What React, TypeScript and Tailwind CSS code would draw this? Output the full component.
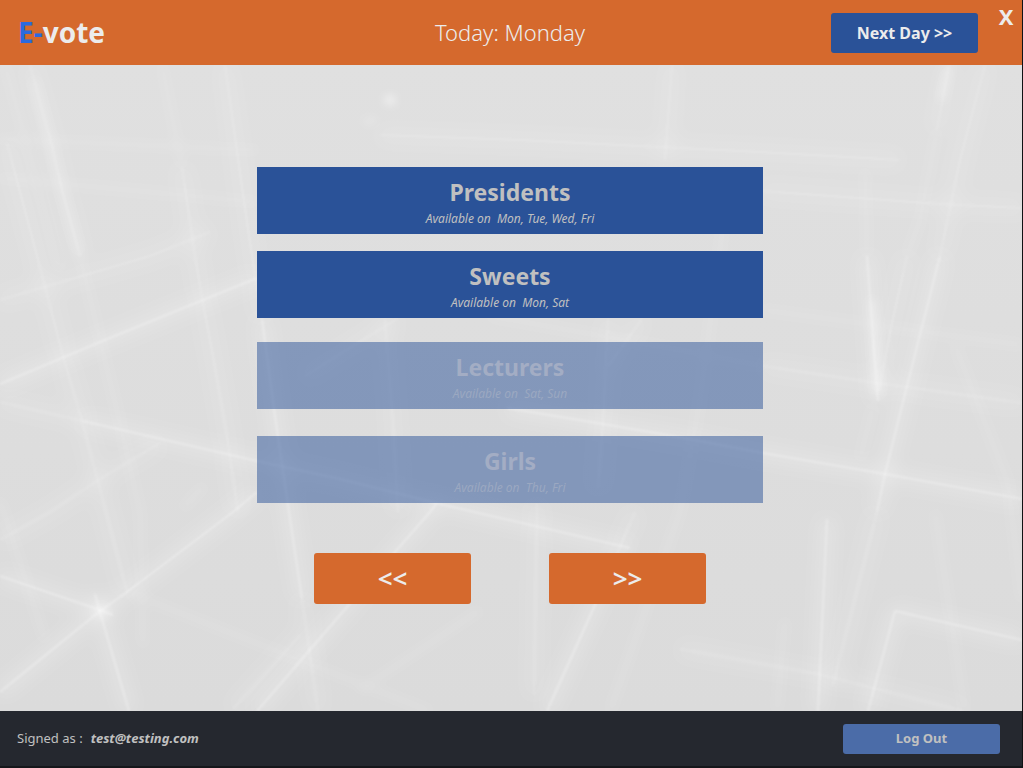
import React from "react";

type Category = { name: string; days: string; open: boolean; spacing: string };

const categories: Category[] = [
  { name: "Presidents", days: "Mon, Tue, Wed, Fri", open: true, spacing: "" },
  { name: "Sweets", days: "Mon, Sat", open: true, spacing: "mt-[17px]" },
  { name: "Lecturers", days: "Sat, Sun", open: false, spacing: "mt-6" },
  { name: "Girls", days: "Thu, Fri", open: false, spacing: "mt-[27px]" },
];

const brightRays = [
  "M0 384L100 342L257 278",
  "M262 319L275 416L289 512L302 599",
  "M83 421L257 461L340 479L440 504L630 548",
  "M0 576L100 610L113 615",
  "M95 594L100 612L129 711",
  "M0 692L100 611L127 592L233 512L257 492",
  "M257 711L340 615L430 512L437 503",
  "M547 711L595 605L610 570",
  "M763 453L885 474L1022 499",
  "M507 408L603 424L673 436L763 453",
  "M895 611L1022 640",
  "M895 611L868 711",
  "M827 519L818 711",
  "M940 256L907 386L885 474L877 512",
  "M867 256L878 401",
];

const softRays = [
  "M0 300L150 256L210 232",
  "M30 65L52 145L62 190L80 256",
  "M7 143L37 256L63 356L82 421L106 512L127 592",
  "M182 167L195 256L203 303L213 356L227 436L238 512",
  "M225 65L242 187L252 256L262 319",
  "M302 599L318 711",
  "M0 402L83 421",
  "M0 540L50 512L100 479L160 443",
  "M233 709L300 635",
  "M380 135L520 140L680 148L760 152L900 160",
  "M762 191L940 204L1022 208",
  "M949 65L937 130",
  "M907 256L892 323L879 390",
  "M985 65L960 160L940 256",
  "M877 512L833 685",
  "M763 366L877 383L1022 403",
  "M537 504L534 695",
  "M610 570L635 512",
  "M608 319L603 423L598 489",
  "M642 319L608 366",
  "M397 319L340 354L305 376",
  "M385 319L393 423L398 512",
  "M680 649L818 674L963 711",
  "M672 65L665 160",
];

const faintRays = [
  "M5 65L45 210L60 270",
  "M80 256L100 340L120 423L140 512L143 645",
  "M937 130L920 220L907 256",
  "M873 406L860 459",
  "M955 345L1008 483L1022 600",
  "M777 711L785 620",
  "M183 508L204 486",
  "M0 178L257 202",
  "M0 139L257 150",
  "M127 592L340 676L430 711",
  "M162 65L182 167",
  "M490 316L680 350L763 366",
  "M360 690L480 610",
  "M610 711L680 512",
  "M725 210L700 400L680 512",
  "M865 170L867 256",
  "M0 500L45 640",
  "M763 310L1022 345",
  "M935 512L965 711",
];

function Backdrop() {
  return (
    <svg
      aria-hidden="true"
      className="absolute inset-0 h-full w-full"
      viewBox="0 65 1022 646"
      preserveAspectRatio="none"
      fill="none"
      stroke="#ffffff"
    >
      <defs>
        <filter id="glow" filterUnits="userSpaceOnUse" x="-20" y="45" width="1062" height="686">
          <feGaussianBlur stdDeviation="8" />
        </filter>
        <filter id="edge" filterUnits="userSpaceOnUse" x="-20" y="45" width="1062" height="686">
          <feGaussianBlur stdDeviation="1" />
        </filter>
        <filter id="haze" filterUnits="userSpaceOnUse" x="-20" y="45" width="1062" height="686">
          <feGaussianBlur stdDeviation="4" />
        </filter>
      </defs>
      <g filter="url(#glow)" strokeWidth="14" strokeOpacity="0.2">
        {brightRays.map((d) => (
          <path key={d} d={d} />
        ))}
      </g>
      <g filter="url(#glow)" strokeWidth="14" strokeOpacity="0.12">
        {softRays.map((d) => (
          <path key={d} d={d} />
        ))}
      </g>
      <g filter="url(#edge)" strokeWidth="2" strokeOpacity="0.28">
        {brightRays.map((d) => (
          <path key={d} d={d} />
        ))}
      </g>
      <g filter="url(#edge)" strokeWidth="2" strokeOpacity="0.12">
        {softRays.map((d) => (
          <path key={d} d={d} />
        ))}
      </g>
      <g filter="url(#haze)" strokeWidth="6" strokeOpacity="0.1">
        {faintRays.map((d) => (
          <path key={d} d={d} />
        ))}
        <path d="M34 80L62 190L80 256" strokeOpacity="0.25" />
        <path d="M949 65L941 100" strokeOpacity="0.35" />
        <path d="M872 300L878 395" strokeOpacity="0.4" />
      </g>
      <g filter="url(#haze)" stroke="none" fill="#ffffff">
        <ellipse cx="390" cy="100" rx="5" ry="4" fillOpacity="0.7" />
        <ellipse cx="370" cy="121" rx="7" ry="3" fillOpacity="0.25" />
        <ellipse cx="101" cy="611" rx="6" ry="5" fillOpacity="0.4" />
      </g>
    </svg>
  );
}

function CategoryButton({ name, days, open, spacing }: Category) {
  return (
    <button
      type="button"
      disabled={!open}
      className={`flex h-[67px] w-full flex-col items-center pt-2 ${spacing} ${
        open ? "bg-[#2a5298] text-[#c0c0c0]" : "bg-[#2a5298]/50 text-[#a3adc4]"
      }`}
    >
      <span className="text-[23px] leading-[34px] font-bold">{name}</span>
      <span className={`mt-0.5 text-[12px] leading-4 whitespace-pre italic ${open ? "" : "text-[#9ba8c1]"}`}>
        {`Available on  ${days}`}
      </span>
    </button>
  );
}

export default function App() {
  return (
    <div className="flex min-h-screen flex-col border-r border-b-2 border-r-[#101214] border-b-[#15171b] bg-[#25282f] font-['Noto_Sans','Open_Sans',sans-serif]">
      <header className="grid h-[65px] grid-cols-[1fr_auto_1fr] items-center bg-[#d5692d] text-[#ececec]">
        <h1 className="pb-0.5 pl-[18px] text-[28px] leading-9 font-bold">
          <span className="text-[#2a6adf]">E-</span>vote
        </h1>
        <p className="pr-0.5 pb-0.5 text-[22px] leading-8 font-light">Today: Monday</p>
        <div className="flex h-full items-start justify-end">
          <button
            type="button"
            className="mt-[13px] mr-3 h-10 w-[147px] rounded-[3px] bg-[#2a5298] text-[16px] font-bold"
          >
            Next Day &gt;&gt;
          </button>
          <button type="button" aria-label="Close" className="h-8 w-8 text-[22px] leading-8 font-bold">
            X
          </button>
        </div>
      </header>

      <main className="relative flex flex-1 flex-col bg-linear-to-b from-[#e0e0e0] to-[#dbdbdb]">
        <Backdrop />
        <div className="relative flex flex-col items-center pt-[102px] pr-[18px] pb-8 pl-4">
          <div className="w-full max-w-[506px]">
            {categories.map((category) => (
              <CategoryButton key={category.name} {...category} />
            ))}
          </div>
          <nav aria-label="Pages" className="mt-[50px] flex gap-[78px] text-[26px] font-semibold text-[#ececec]">
            <button type="button" aria-label="Previous page" className="h-[51px] w-[157px] rounded-[3px] bg-[#d5692d]">
              &lt;&lt;
            </button>
            <button type="button" aria-label="Next page" className="h-[51px] w-[157px] rounded-[3px] bg-[#d5692d]">
              &gt;&gt;
            </button>
          </nav>
        </div>
      </main>

      <footer className="flex h-[55px] items-center justify-between pr-[22px] pl-[17px] text-[#c0c0c0]">
        <p className="flex items-baseline gap-2 text-[13px]">
          <span>Signed as :</span>
          <span className="font-bold italic">test@testing.com</span>
        </p>
        <button type="button" className="h-[30px] w-[157px] rounded-[3px] bg-[#4b6ca8] text-[13px] font-bold">
          Log Out
        </button>
      </footer>
    </div>
  );
}
